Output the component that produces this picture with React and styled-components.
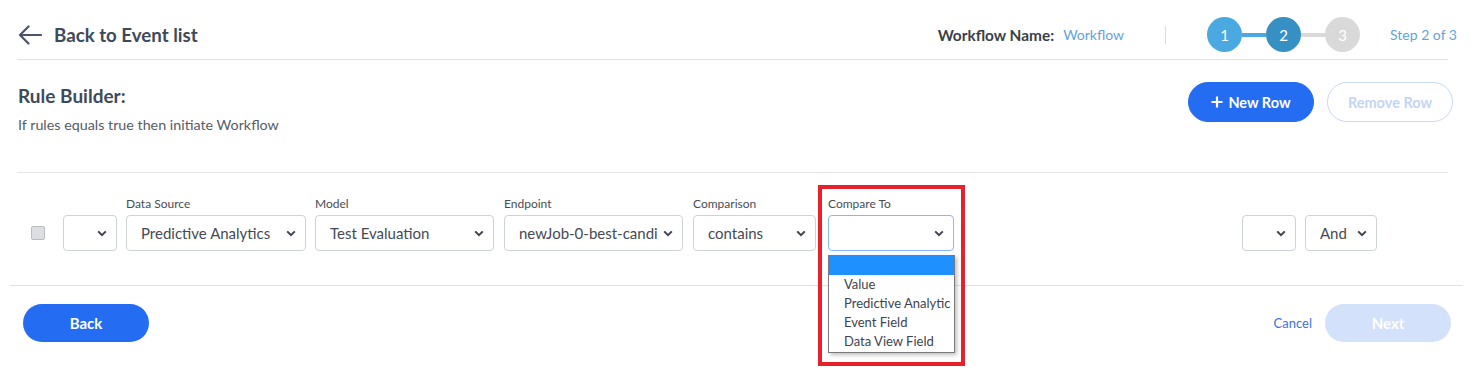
import React from 'react';
import styled, { createGlobalStyle } from 'styled-components';

const GlobalStyle = createGlobalStyle`
  body {
    margin: 0;
    background: #fff;
    font-family: Lato, "Open Sans", sans-serif;
    color: #3e4a5a;
  }
`;

const Chevron = () => (
  <svg width="10" height="7" viewBox="0 0 10 7">
    <path d="M1.2 1.4 L5 5.2 L8.8 1.4" fill="none" stroke="#3d4450" strokeWidth="2" />
  </svg>
);

const ArrowLeft = () => (
  <svg width="24" height="20" viewBox="0 0 24 20">
    <path d="M23 10 H2 M10.5 1.5 L2 10 L10.5 18.5" fill="none" stroke="#4a5567" strokeWidth="2.2" strokeLinecap="round" strokeLinejoin="round" />
  </svg>
);

const Plus = () => (
  <svg width="12" height="12" viewBox="0 0 12 12">
    <path d="M6 0.5 V11.5 M0.5 6 H11.5" stroke="#fff" strokeWidth="2.2" />
  </svg>
);

const Select = ({ value, width, focused }) => (
  <StSelect $width={width} $focused={focused}>
    <StSelectText>{value}</StSelectText>
    <Chevron />
  </StSelect>
);

const App = () => {
  return (
    <StPage>
      <GlobalStyle />
      <StTop>
        <StHeader>
          <StBackLink>
            <ArrowLeft />
            <span>Back to Event list</span>
          </StBackLink>
          <StHeaderRight>
            <StNameLabel>Workflow Name:</StNameLabel>
            <StNameValue>Workflow</StNameValue>
            <StVDivider />
            <StStepper>
              <StCircle $color="#4aa9e0">1</StCircle>
              <StConnector $color="#4aa9e0" />
              <StCircle $color="#3790c4">2</StCircle>
              <StConnector $color="#d9d9d9" />
              <StCircle $color="#d9d9d9">3</StCircle>
            </StStepper>
            <StStepText>Step 2 of 3</StStepText>
          </StHeaderRight>
        </StHeader>

        <StRuleHeader>
          <div>
            <StTitle>Rule Builder:</StTitle>
            <StSubtitle>If rules equals true then initiate Workflow</StSubtitle>
          </div>
          <StActions>
            <StPillButton $variant="primary">
              <Plus />
              New Row
            </StPillButton>
            <StPillButton $variant="outline">Remove Row</StPillButton>
          </StActions>
        </StRuleHeader>

        <StRuleRow>
          <StCheckbox />
          <Select width={54} />
          <StField>
            <StLabel>Data Source</StLabel>
            <Select width={180} value="Predictive Analytics" />
          </StField>
          <StField>
            <StLabel>Model</StLabel>
            <Select width={179} value="Test Evaluation" />
          </StField>
          <StField $gap={10}>
            <StLabel>Endpoint</StLabel>
            <Select width={179} value="newJob-0-best-candi" />
          </StField>
          <StField $gap={10}>
            <StLabel>Comparison</StLabel>
            <Select width={123} value="contains" />
          </StField>
          <StField $gap={12}>
            <StLabel>Compare To</StLabel>
            <Select width={126} focused />
            <StOptionList>
              <StOption $active>&nbsp;</StOption>
              <StOption>Value</StOption>
              <StOption>Predictive Analytic</StOption>
              <StOption>Event Field</StOption>
              <StOption>Data View Field</StOption>
            </StOptionList>
            <StHighlight />
          </StField>
          <StRowEnd>
            <Select width={54} />
            <Select width={72} value="And" />
          </StRowEnd>
        </StRuleRow>
      </StTop>

      <StFooter>
        <StFooterButton $variant="primary">Back</StFooterButton>
        <StFooterRight>
          <StCancel>Cancel</StCancel>
          <StFooterButton $variant="disabled">Next</StFooterButton>
        </StFooterRight>
      </StFooter>
    </StPage>
  );
};

export default App;

const StPage = styled.div`
  width: 1477px;
  height: 380px;
  box-sizing: border-box;
  padding: 0 14px 0 10px;
  overflow: hidden;
`;

const StTop = styled.div`
  padding: 0 15px 0 7px;
`;

const StHeader = styled.div`
  height: 59px;
  display: flex;
  align-items: center;
  justify-content: space-between;
  border-bottom: 1px solid #dfe2e8;
`;

const StBackLink = styled.div`
  display: flex;
  align-items: center;
  gap: 12px;
  padding-left: 1px;
  padding-top: 10px;
  font-size: 18.7px;
  font-weight: 700;
  color: #3e4a5a;
  cursor: pointer;
`;

const StHeaderRight = styled.div`
  display: flex;
  align-items: center;
  margin-right: -9px;
  padding-top: 10px;
`;

const StNameLabel = styled.span`
  font-size: 15.4px;
  font-weight: 700;
  color: #3a3f47;
`;

const StNameValue = styled.span`
  margin-left: 9px;
  font-size: 14px;
  color: #5da5dc;
`;

const StVDivider = styled.div`
  width: 1px;
  height: 18px;
  background: #d9dce2;
  margin: 0 41px 0 41px;
`;

const StStepper = styled.div`
  display: flex;
  align-items: center;
`;

const StCircle = styled.div`
  width: 35px;
  height: 35px;
  border-radius: 50%;
  background: ${(p) => p.$color};
  color: #fff;
  font-size: 15px;
  display: flex;
  align-items: center;
  justify-content: center;
`;

const StConnector = styled.div`
  width: 24px;
  height: 4px;
  background: ${(p) => p.$color};
`;

const StStepText = styled.span`
  margin-left: 30px;
  font-size: 14px;
  color: #5da5dc;
`;

const StRuleHeader = styled.div`
  height: 112px;
  display: flex;
  justify-content: space-between;
  align-items: flex-start;
  border-bottom: 1px solid #e3e5ea;
`;

const StTitle = styled.h2`
  margin: 24px 0 0 1px;
  font-size: 19px;
  font-weight: 700;
  color: #3e4a5a;
`;

const StSubtitle = styled.p`
  margin: 9px 0 0 1px;
  font-size: 14.3px;
  color: #555c66;
`;

const StActions = styled.div`
  display: flex;
  gap: 13px;
  margin-top: 22px;
  margin-right: -5px;
`;

const StPillButton = styled.button`
  width: 126px;
  height: 40px;
  border-radius: 20px;
  display: flex;
  align-items: center;
  justify-content: center;
  gap: 5px;
  padding: 0;
  font-family: inherit;
  font-size: 14.5px;
  font-weight: 700;
  cursor: pointer;
  background: ${(p) => (p.$variant === 'primary' ? '#246cf1' : '#fff')};
  color: ${(p) => (p.$variant === 'primary' ? '#fff' : '#c3d5f6')};
  border: 1px solid ${(p) => (p.$variant === 'primary' ? '#246cf1' : '#c9d9f7')};
`;

const StRuleRow = styled.div`
  height: 112px;
  display: flex;
  align-items: flex-end;
  padding: 0 0 34px 14px;
  box-sizing: border-box;
  gap: 9px;
`;

const StCheckbox = styled.div`
  width: 12px;
  height: 12px;
  border: 1px solid #b9bcc1;
  border-radius: 2px;
  background: #dcdee1;
  margin-right: 9px;
  align-self: flex-end;
  margin-bottom: 11px;
`;

const StField = styled.div`
  position: relative;
  display: flex;
  flex-direction: column;
  margin-left: ${(p) => (p.$gap ? p.$gap - 9 : 0)}px;
`;

const StLabel = styled.label`
  font-size: 12px;
  color: #474d56;
  margin-bottom: 4px;
  line-height: 14px;
`;

const StSelect = styled.div`
  width: ${(p) => p.$width}px;
  height: 36px;
  box-sizing: border-box;
  display: flex;
  align-items: center;
  justify-content: space-between;
  padding: 0 9px 0 14px;
  border: 1px solid ${(p) => (p.$focused ? '#86b7fe' : '#ced2d9')};
  border-radius: 4px;
  background: #fff;
`;

const StSelectText = styled.span`
  font-size: 15px;
  color: #444a53;
  white-space: nowrap;
  overflow: hidden;
`;

const StOptionList = styled.div`
  position: absolute;
  top: 58px;
  left: 0;
  width: 127px;
  box-sizing: border-box;
  border: 1px solid #7a7a7a;
  background: #fff;
  box-shadow: 2px 2px 4px rgba(0, 0, 0, 0.25);
  z-index: 2;
  padding-bottom: 1px;
`;

const StOption = styled.div`
  height: 19px;
  line-height: 19px;
  padding-left: 15px;
  font-size: 13px;
  color: #3d4350;
  white-space: nowrap;
  overflow: hidden;
  background: ${(p) => (p.$active ? '#1e90ff' : 'transparent')};
`;

const StHighlight = styled.div`
  position: absolute;
  left: -10px;
  top: -12px;
  width: 147px;
  height: 181px;
  box-sizing: border-box;
  border: 4px solid #e8202a;
  z-index: 3;
`;

const StRowEnd = styled.div`
  margin-left: auto;
  margin-right: 71px;
  display: flex;
  gap: 9px;
`;

const StFooter = styled.div`
  border-top: 1px solid #dfe2e8;
  display: flex;
  justify-content: space-between;
  align-items: center;
  padding: 18px 12px 0 13px;
`;

const StFooterRight = styled.div`
  display: flex;
  align-items: center;
  gap: 13px;
`;

const StCancel = styled.span`
  font-size: 13px;
  color: #3f6fe8;
  cursor: pointer;
`;

const StFooterButton = styled.button`
  width: 126px;
  height: 38px;
  border: none;
  border-radius: 19px;
  font-family: inherit;
  font-size: 15px;
  font-weight: 700;
  color: #fff;
  cursor: pointer;
  background: ${(p) => (p.$variant === 'primary' ? '#246cf1' : '#d3e1fb')};
`;
